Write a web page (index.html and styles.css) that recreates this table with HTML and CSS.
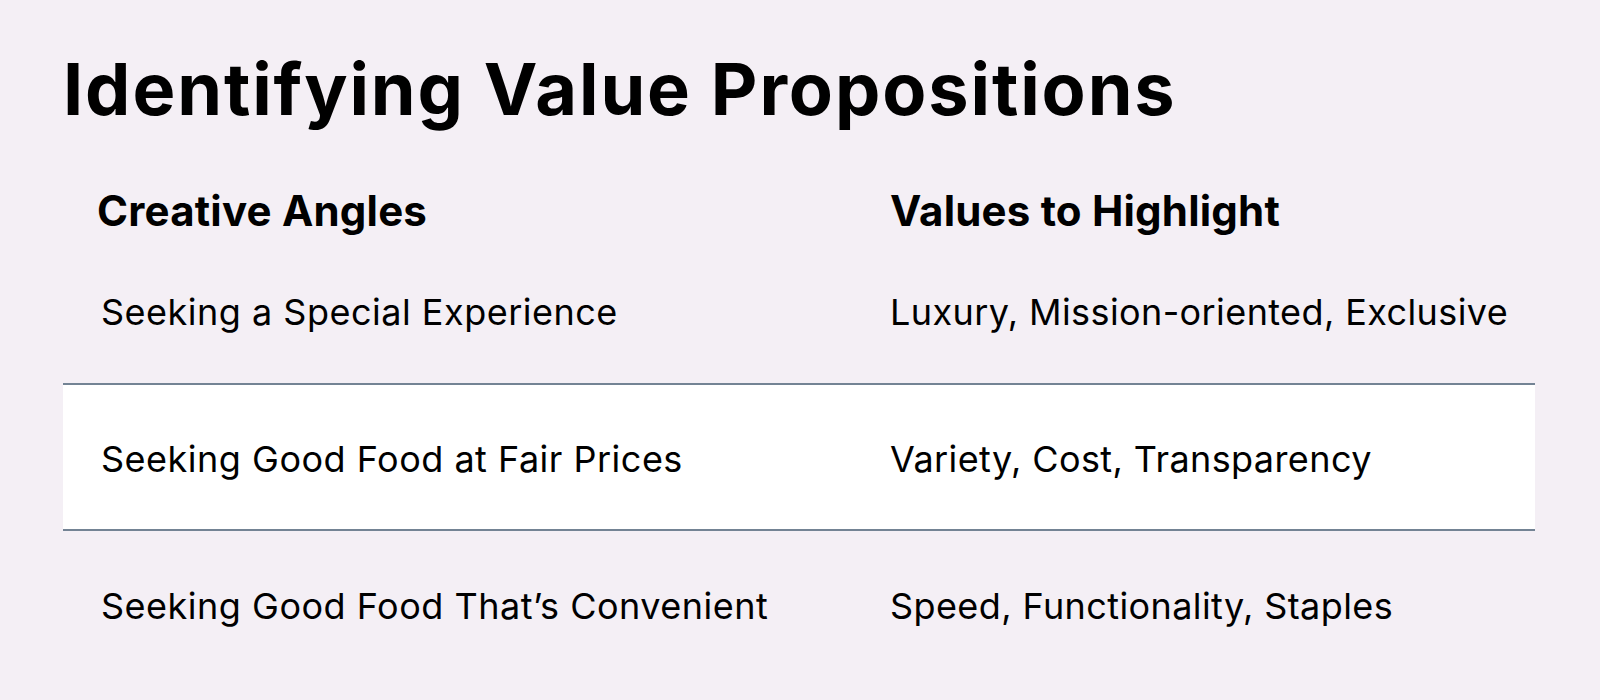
FILE: index.html
```html
<!DOCTYPE html>
<html lang="en">
<head>
    <meta charset="UTF-8">
    <meta name="viewport" content="width=device-width, initial-scale=1.0">
    <title>Identifying Value Propositions</title>
    <link rel="stylesheet" href="styles.css">
</head>
<body>
    <div class="slide">
        <h1>Identifying Value Propositions</h1>
        <div class="grid">
            <div class="row head">
                <div class="cell">Creative Angles</div>
                <div class="cell">Values to Highlight</div>
            </div>
            <div class="row">
                <div class="cell">Seeking a Special Experience</div>
                <div class="cell">Luxury, Mission-oriented, Exclusive</div>
            </div>
            <div class="row band">
                <div class="cell">Seeking Good Food at Fair Prices</div>
                <div class="cell">Variety, Cost, Transparency</div>
            </div>
            <div class="row">
                <div class="cell">Seeking Good Food That’s Convenient</div>
                <div class="cell">Speed, Functionality, Staples</div>
            </div>
        </div>
    </div>
</body>
</html>
```

FILE: styles.css
```css
body {
    margin: 0;
    background-color: #f4eff5;
    font-family: Inter, "Open Sans", sans-serif;
    color: #000;
}
.slide {
    padding: 47px 0 0 63px;
}
.slide h1 {
    font-size: 72px;
    font-weight: 700;
    line-height: 84px;
    margin: 0 0 52px;
    letter-spacing: 1.9px;
}
.grid {
    width: 1472px;
}
.row {
    display: grid;
    grid-template-columns: 790px 1fr;
    align-items: center;
    height: 146px;
    font-size: 36px;
    letter-spacing: 0.5px;
}
.row .cell {
    padding: 4px 0 0 38px;
}
.row .cell + .cell {
    padding-left: 37px;
}
.row .cell + .cell {
    letter-spacing: 0.4px;
}
.row.head {
    height: 54px;
    font-size: 42px;
    font-weight: 700;
    letter-spacing: 0;
}
.row.head .cell {
    padding-top: 0;
    letter-spacing: 0.2px;
}
.row.head .cell:first-child {
    padding-left: 34px;
}
.row.band {
    box-sizing: border-box;
    height: 148px;
    background-color: #fff;
    border-top: 2px solid #738394;
    border-bottom: 2px solid #738394;
}
```
